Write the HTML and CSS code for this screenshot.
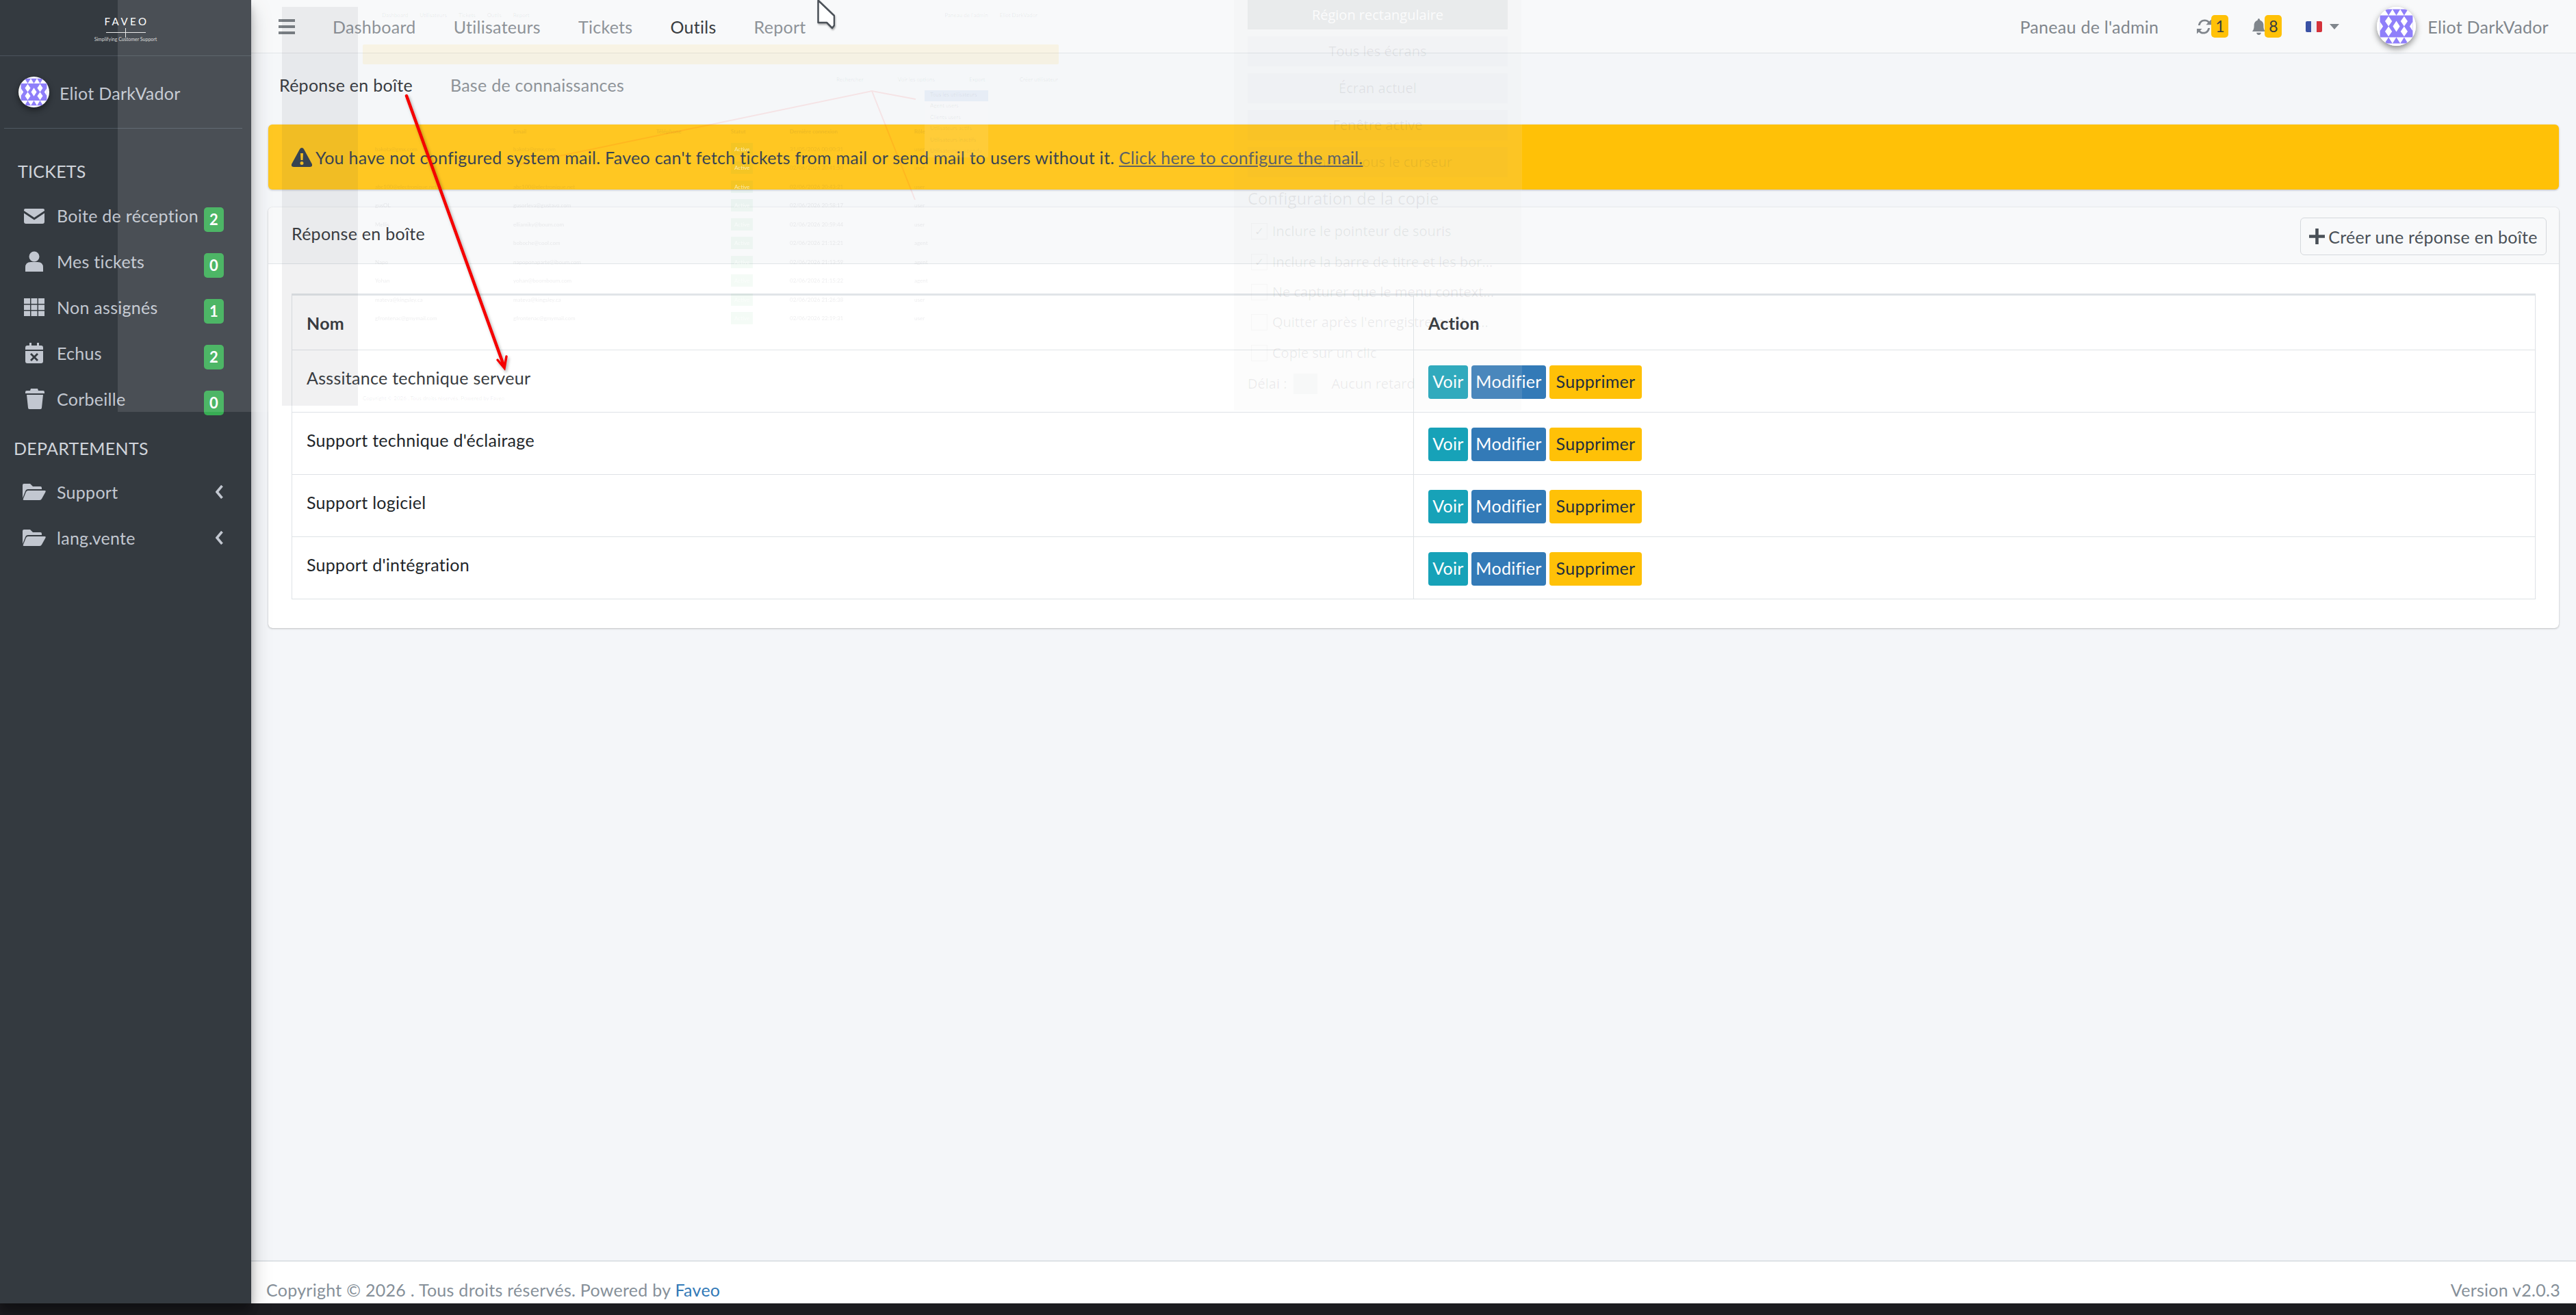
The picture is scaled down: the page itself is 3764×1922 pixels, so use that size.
FILE: index.html
```html
<!DOCTYPE html>
<html lang="fr">
<head>
  <meta charset="UTF-8">
  <title>Faveo - Réponse en boîte</title>
  <link rel="stylesheet" href="styles.css">
</head>
<body>
  <svg class="defs" width="0" height="0">
    <symbol id="identicon" viewBox="0 0 100 100">
      <rect width="100" height="100" fill="#fff"/>
      <path fill="#8f7ffa" d="M20 6H40L30 22ZM40 6H60L50 22ZM60 6H80L70 22ZM8 22H92V78H8ZM20 94H40L30 78ZM40 94H60L50 78ZM60 94H80L70 78Z"/>
      <path fill="#fff" d="M30 24L39 37L30 50L21 37ZM70 24L79 37L70 50L61 37ZM50 36L59 50L50 64L41 50ZM30 50L39 63L30 76L21 63ZM70 50L79 63L70 76L61 63ZM8 38L16 50L8 62ZM92 38V62L84 50Z"/>
    </symbol>
  </svg>

  <div class="app">
    <aside class="sidebar">
      <div class="brand">
        <div class="brand-name">FAVEO</div>
        <div class="brand-rule"></div>
        <div class="brand-tag">Simplifying Customer Support</div>
      </div>
      <div class="user-panel">
        <svg class="avatar"><use href="#identicon"/></svg>
        <span>Eliot DarkVador</span>
      </div>
      <div class="nav-head">TICKETS</div>
      <a class="nav-item">
        <svg class="nav-icon" viewBox="0 0 30 30"><path d="M2 5H28Q30 5 30 7V8L15 18L0 8V7Q0 5 2 5ZM0 11.500L15 21.500L30 11.500V24Q30 27 27 27H3Q0 27 0 24Z"/></svg>
        <span>Boite de réception</span><b class="badge">2</b>
      </a>
      <a class="nav-item">
        <svg class="nav-icon" viewBox="0 0 30 30"><circle cx="15" cy="8" r="7.500"/><path d="M2 30V24Q2 16 10 16H20Q28 16 28 24V30Z"/></svg>
        <span>Mes tickets</span><b class="badge">0</b>
      </a>
      <a class="nav-item">
        <svg class="nav-icon" viewBox="0 0 30 30"><path d="M0 2H9V10H0ZM10.500 2H19.500V10H10.500ZM21 2H30V10H21ZM0 11.500H9V19H0ZM10.500 11.500H19.500V19H10.500ZM21 11.500H30V19H21ZM0 20.500H9V28H0ZM10.500 20.500H19.500V28H10.500ZM21 20.500H30V28H21Z"/></svg>
        <span>Non assignés</span><b class="badge">1</b>
      </a>
      <a class="nav-item">
        <svg class="nav-icon" viewBox="0 0 30 30"><path fill-rule="evenodd" d="M8 0H11V4H19V0H22V4H25Q28 4 28 7V10H2V7Q2 4 5 4H8ZM2 12H28V27Q28 30 25 30H5Q2 30 2 27ZM11 15L9 17L13 21L9 25L11 27L15 23L19 27L21 25L17 21L21 17L19 15L15 19Z"/></svg>
        <span>Echus</span><b class="badge">2</b>
      </a>
      <a class="nav-item">
        <svg class="nav-icon" viewBox="0 0 30 30"><path d="M10 0H20L21 3H28Q30 3 30 5V7H2V5Q2 3 4 3H9ZM4 9H28L26 28Q26 30 24 30H8Q6 30 6 28Z"/></svg>
        <span>Corbeille</span><b class="badge">0</b>
      </a>
      <div class="nav-head nav-head-dept">DEPARTEMENTS</div>
      <a class="nav-item nav-dept">
        <svg class="nav-icon" viewBox="0 0 34 30"><path d="M0 5Q0 3 2 3H11L15 7H26Q28 7 28 9V11H8Q5 11 4 14L0 24ZM8 13H32Q35 13 33 16L28 25Q27 27 25 27H2Q0 27 1 25L5 15Q6 13 8 13Z"/></svg>
        <span>Support</span>
        <svg class="chevron" viewBox="0 0 12 20"><path d="M9.500 1L2 10L9.500 19" fill="none" stroke="currentColor" stroke-width="3.600"/></svg>
      </a>
      <a class="nav-item nav-dept">
        <svg class="nav-icon" viewBox="0 0 34 30"><path d="M0 5Q0 3 2 3H11L15 7H26Q28 7 28 9V11H8Q5 11 4 14L0 24ZM8 13H32Q35 13 33 16L28 25Q27 27 25 27H2Q0 27 1 25L5 15Q6 13 8 13Z"/></svg>
        <span>lang.vente</span>
        <svg class="chevron" viewBox="0 0 12 20"><path d="M9.500 1L2 10L9.500 19" fill="none" stroke="currentColor" stroke-width="3.600"/></svg>
      </a>
    </aside>

    <div class="main">
      <nav class="topbar">
        <svg class="burger" viewBox="0 0 24 22"><path d="M0 0H24V4H0ZM0 9H24V13H0ZM0 18H24V22H0Z"/></svg>
        <div class="top-links">
          <a>Dashboard</a>
          <a>Utilisateurs</a>
          <a>Tickets</a>
          <a class="active">Outils</a>
          <a>Report</a>
        </div>
        <div class="top-right">
          <a class="admin-link">Paneau de l'admin</a>
          <span class="top-icon">
            <svg viewBox="0 0 24 26"><path d="M3 11C4 5 8 2 13 2C16 2 18 3 20 5L23 2V10H15L18 7C16 5 15 5 13 5C9 5 7 7 6 11ZM21 15C20 21 16 24 11 24C8 24 6 23 4 21L1 24V16H9L6 19C8 21 9 21 11 21C15 21 17 19 18 15Z"/></svg>
            <b class="count">1</b>
          </span>
          <span class="top-icon top-bell">
            <svg viewBox="0 0 22 28"><path d="M11 0Q13 0 13 3Q19 5 19 12C19 18 20 19 22 22H0C2 19 3 18 3 12Q3 5 9 3Q9 0 11 0ZM7 24H15Q14 28 11 28Q8 28 7 24Z"/></svg>
            <b class="count">8</b>
          </span>
          <span class="lang">
            <span class="flag"><i></i><i></i><i></i></span>
            <span class="caret"></span>
          </span>
          <span class="top-user">
            <svg class="avatar avatar-top"><use href="#identicon"/></svg>
            <span>Eliot DarkVador</span>
          </span>
        </div>
      </nav>

      <div class="subnav">
        <a class="active">Réponse en boîte</a>
        <a>Base de connaissances</a>
      </div>

      <div class="content">
        <div class="alert">
          <svg class="alert-icon" viewBox="0 0 30 28"><path fill-rule="evenodd" d="M15 0Q17 0 18 2L30 24Q31 28 27 28H3Q-1 28 0 24L12 2Q13 0 15 0ZM13 8L13.500 18H16.500L17 8ZM15 20A2.500 2.500 0 1 0 15 25A2.500 2.500 0 1 0 15 20Z"/></svg>
          <span>You have not configured system mail. Faveo can't fetch tickets from mail or send mail to users without it. <a>Click here to configure the mail.</a></span>
        </div>

        <section class="card">
          <header class="card-head">
            <span class="card-title">Réponse en boîte</span>
            <a class="btn-create">
              <svg viewBox="0 0 20 20"><path d="M8 0H12V8H20V12H12V20H8V12H0V8H8Z"/></svg>
              <span>Créer une réponse en boîte</span>
            </a>
          </header>
          <div class="card-body">
            <table class="data-table">
              <thead>
                <tr><th class="col-name">Nom</th><th>Action</th></tr>
              </thead>
              <tbody>
                <tr>
                  <td>Asssitance technique serveur</td>
                  <td class="col-action"><a class="btn btn-info">Voir</a><a class="btn btn-blue">Modifier</a><a class="btn btn-warn">Supprimer</a></td>
                </tr>
                <tr>
                  <td>Support technique d'éclairage</td>
                  <td class="col-action"><a class="btn btn-info">Voir</a><a class="btn btn-blue">Modifier</a><a class="btn btn-warn">Supprimer</a></td>
                </tr>
                <tr>
                  <td>Support logiciel</td>
                  <td class="col-action"><a class="btn btn-info">Voir</a><a class="btn btn-blue">Modifier</a><a class="btn btn-warn">Supprimer</a></td>
                </tr>
                <tr>
                  <td>Support d'intégration</td>
                  <td class="col-action"><a class="btn btn-info">Voir</a><a class="btn btn-blue">Modifier</a><a class="btn btn-warn">Supprimer</a></td>
                </tr>
              </tbody>
            </table>
          </div>
        </section>
      </div>

      <footer class="footer">
        <span>Copyright © 2026 . Tous droits réservés. Powered by <a>Faveo</a></span>
        <span>Version v2.0.3</span>
      </footer>
    </div>
  </div>
  <div class="taskbar"></div>

  <!-- faded screenshot tool window sitting over the page -->
  <div class="ghost">
    <div class="mini-side"></div>
    <div class="mini-nav">
      <span>Dashboard</span><span>Utilisateurs</span><span>Tickets</span><span>Outils</span><span>Report</span>
      <span class="mini-push">Paneau de l'admin</span><span>Eliot DarkVador</span>
    </div>
    <div class="mini-alert"></div>
    <div class="mini-tools"><span>Rechercher</span><span>Voir les options</span><span>Export</span><span>Créer utilisateur</span></div>
    <div class="mini-table">
      <div class="mini-row mini-title"><span></span><span>Email</span><span>Téléphone</span><span>Statut</span><span>Dernière connexion</span><span>Rôle</span></div>
      <div class="mini-row"><span>bakota@gmx.com</span><span>bakota@gmx.com</span><span></span><span><i class="mini-tag">Active</i></span><span>31/05/2026 00:00:31</span><span>user</span></div>
      <div class="mini-row"><span></span><span></span><span></span><span><i class="mini-tag">Active</i></span><span>02/06/2026 20:41:50</span><span>user</span></div>
      <div class="mini-row"><span>abc100@electronique.net</span><span>abc100@electronique.net</span><span></span><span><i class="mini-tag">Active</i></span><span>02/06/2026 20:43:21</span><span>user</span></div>
      <div class="mini-row"><span>gusOL</span><span>gusorleva@gustavo.com</span><span></span><span><i class="mini-tag">Active</i></span><span>02/06/2026 20:58:17</span><span>user</span></div>
      <div class="mini-row"><span>Mellis</span><span>elliamiky@boum.com</span><span></span><span><i class="mini-tag">Active</i></span><span>02/06/2026 20:59:44</span><span>user</span></div>
      <div class="mini-row"><span></span><span>boboche@cool.com</span><span></span><span><i class="mini-tag">Active</i></span><span>02/06/2026 21:12:21</span><span>agent</span></div>
      <div class="mini-row"><span>Napo</span><span>napoponaparte@iboum.com</span><span></span><span><i class="mini-tag">Active</i></span><span>02/06/2026 21:13:59</span><span>agent</span></div>
      <div class="mini-row"><span>Yohan</span><span>yohan@boomboum.com</span><span></span><span><i class="mini-tag">Active</i></span><span>02/06/2026 21:15:22</span><span>agent</span></div>
      <div class="mini-row"><span>mateva@kingsley.ca</span><span>mateva@kingsley.ca</span><span></span><span><i class="mini-tag">Active</i></span><span>02/06/2026 21:26:38</span><span>user</span></div>
      <div class="mini-row"><span>gfrontenac@gmymail.com</span><span>gfrontenac@gmymail.com</span><span></span><span><i class="mini-tag">Active</i></span><span>02/06/2026 22:19:31</span><span>user</span></div>
    </div>
    <div class="mini-menu">
      <span class="sel">Tous les utilisateurs</span><span>Agent users</span><span>Clients users</span><span>Utilisateurs actifs</span><span>Utilisateurs inactifs</span><span>Utilisateurs suspendu</span>
    </div>
    <div class="mini-foot">Copyright © 2026 . Tous droits réservés. Powered by Faveo</div>
    <svg class="mini-arrows" viewBox="0 0 1000 600"><path d="M340 240L854 133L918 145M854 133L917 292" fill="none" stroke="#f00" stroke-opacity=".08" stroke-width="2"/></svg>

    <div class="tool-panel">
      <div class="tool-btn tool-main">Région rectangulaire</div>
      <div class="tool-btn">Tous les écrans</div>
      <div class="tool-btn">Écran actuel</div>
      <div class="tool-btn">Fenêtre active</div>
      <div class="tool-btn">Fenêtre sous le curseur</div>
      <div class="tool-title">Configuration de la copie</div>
      <div class="tool-check"><i>✓</i>Inclure le pointeur de souris</div>
      <div class="tool-check"><i>✓</i>Inclure la barre de titre et les bor...</div>
      <div class="tool-check"><i></i>Ne capturer que le menu context...</div>
      <div class="tool-check"><i></i>Quitter après l'enregistrement o...</div>
      <div class="tool-check"><i></i>Copie sur un clic</div>
      <div class="tool-delay"><span>Délai :</span><i></i><span>Aucun retard</span></div>
    </div>
  </div>

  <svg class="red-arrow" viewBox="0 0 200 420">
    <g fill="none" stroke="#f50000" stroke-linecap="round">
      <path d="M8 4L150 398" stroke-width="4.500"/>
      <path d="M141 390L151 402L154 385" stroke-width="3.500"/>
    </g>
  </svg>
  <svg class="cursor" viewBox="0 0 26 44"><path d="M1.500 1.500V34H14L22 42L25 38V24Z" fill="#fff" stroke="#4b5158" stroke-width="2.500" stroke-linejoin="round"/></svg>
</body>
</html>
```

FILE: styles.css
```css
* {
  box-sizing: border-box;
}

html, body {
  margin: 0;
  height: 100%;
}

body {
  position: relative;
  width: 3764px;
  height: 1922px;
  overflow: hidden;
  font-family: Lato, "Noto Sans", sans-serif;
  font-size: 25px;
  letter-spacing: 0.28px;
  line-height: 36px;
  color: #212529;
  background: #f4f6f9;
}

a {
  color: inherit;
  text-decoration: none;
}

.defs {
  position: absolute;
}

.app {
  display: flex;
  height: 1905px;
}

.taskbar {
  height: 17px;
  background: #1c1c20;
}

/* sidebar */
.sidebar {
  width: 367px;
  flex: none;
  background: #343a40;
  color: #c2c7d0;
  box-shadow: 0 14px 28px rgba(0, 0, 0, 0.25), 0 10px 10px rgba(0, 0, 0, 0.22);
  position: relative;
}

.brand {
  height: 82px;
  padding-top: 22px;
  border-bottom: 1px solid #4b545c;
  text-align: center;
  color: #fff;
  letter-spacing: 0;
}

.brand-name {
  font-size: 15px;
  line-height: 18px;
  letter-spacing: 3.500px;
  padding-left: 3px;
}

.brand-rule {
  width: 58px;
  height: 1px;
  margin: 7px auto 4px;
  background: #e8e8e8;
  position: relative;
}

.brand-rule::after {
  content: "";
  position: absolute;
  left: 28px;
  top: -6px;
  width: 1px;
  height: 14px;
  background: #e8e8e8;
}

.brand-tag {
  font-size: 7px;
  line-height: 10px;
  color: #d8d8d8;
}

.user-panel {
  height: 106px;
  margin: 0 13px 0 6px;
  padding-left: 21px;
  display: flex;
  align-items: center;
  gap: 15px;
  border-bottom: 1px solid #4f5962;
}

.user-panel span {
  padding-top: 3px;
}

.avatar {
  width: 45px;
  height: 45px;
  border-radius: 50%;
  flex: none;
  box-shadow: 0 4px 10px rgba(0, 0, 0, 0.45);
}

.nav-head {
  padding: 44px 0 13.5px 26px;
  color: #d0d4db;
}

.nav-head-dept {
  padding: 20.5px 0 12px 20px;
}

.nav-item {
  height: 67px;
  display: flex;
  align-items: center;
  padding: 0 40px 0 35px;
  white-space: nowrap;
}

.nav-icon {
  width: 30px;
  height: 30px;
  margin-right: 18px;
  flex: none;
  fill: #c2c7d0;
}

.nav-dept .nav-icon {
  width: 34px;
  margin-left: -2px;
  margin-right: 16px;
}

.badge {
  margin-left: auto;
  margin-top: 12px;
  width: 29px;
  flex: none;
  height: 36px;
  border-radius: 5px;
  background: #38ad54;
  color: #fff;
  text-align: center;
  font-size: 22px;
  font-weight: 700;
  letter-spacing: 0;
}

.chevron {
  width: 12px;
  height: 20px;
  margin-left: auto;
  color: #c2c7d0;
}

/* top bar */
.main {
  flex: 1;
  min-width: 0;
  display: flex;
  flex-direction: column;
}

.topbar {
  height: 78px;
  display: flex;
  align-items: center;
  padding: 0 40px;
  background: #f8f9fa;
  border-bottom: 1px solid #dee2e6;
  color: #80868c;
}

.burger {
  width: 24px;
  height: 22px;
  fill: #6b7177;
  margin-right: 55px;
}

.top-links, .subnav {
  display: flex;
  gap: 55px;
}

.active {
  color: #212529;
}

.top-right {
  margin-left: auto;
  display: flex;
  align-items: center;
}

.admin-link {
  margin-right: 55px;
}

.top-icon {
  display: flex;
  align-items: center;
  margin-right: 35px;
}

.top-icon svg {
  height: 26px;
  width: 23px;
  fill: #80868c;
}

.top-bell svg {
  width: 19px;
}

.count {
  width: 25px;
  height: 33px;
  margin-left: -1px;
  border-radius: 5px;
  background: #ffc107;
  color: #343a40;
  font-weight: 400;
  font-size: 23px;
  line-height: 33px;
  text-align: center;
  letter-spacing: 0;
}

.lang {
  display: flex;
  align-items: center;
  gap: 11px;
  margin-right: 55px;
}

.flag {
  display: flex;
  width: 24px;
  height: 16px;
  border-radius: 2px;
  overflow: hidden;
}

.flag i {
  flex: 1;
  background: #3a52a5;
}

.flag i:nth-child(2) {
  background: #eef0f6;
}

.flag i:nth-child(3) {
  background: #d4323a;
}

.caret {
  border: 7px solid transparent;
  border-top: 8px solid #80868c;
  border-bottom: 0;
}

.top-user {
  display: flex;
  align-items: center;
  gap: 17px;
}

.avatar-top {
  width: 57px;
  height: 57px;
}

/* page content */
.subnav {
  height: 92px;
  align-items: center;
  padding-left: 41px;
  color: #80868c;
}

.content {
  flex: 1;
  padding: 12px 25px 0;
}

.alert {
  height: 95px;
  display: flex;
  align-items: center;
  gap: 5px;
  padding-left: 34px;
  background: #ffc107;
  border-radius: 6px;
  color: #1f2d3d;
  box-shadow: 0 1px 3px rgba(0, 0, 0, 0.25);
}

.alert-icon {
  width: 30px;
  height: 28px;
  fill: #1f2d3d;
  flex: none;
}

.alert a {
  color: #4a4f55;
  text-decoration: underline;
}

.card {
  margin-top: 26px;
  background: #fff;
  border-radius: 6px;
  box-shadow: 0 0 1px rgba(0, 0, 0, 0.25), 0 1px 3px rgba(0, 0, 0, 0.2);
}

.card-head {
  height: 83px;
  display: flex;
  align-items: center;
  justify-content: space-between;
  padding: 0 18px 0 34px;
  background: #f8f9fa;
  border-bottom: 1px solid #dee2e6;
  border-radius: 6px 6px 0 0;
}

.card-title {
  margin-bottom: 6px;
}

.btn-create {
  height: 55px;
  width: 360px;
  margin-top: 3px;
  display: flex;
  align-items: center;
  justify-content: center;
  gap: 5px;
  border: 1px solid #d5d8dc;
  border-radius: 6px;
  color: #495057;
  white-space: nowrap;
}

.btn-create svg {
  width: 23px;
  height: 23px;
  fill: #495057;
  flex: none;
}

.card-body {
  padding: 43px 34px 42px;
}

.data-table {
  width: 100%;
  border-collapse: collapse;
  table-layout: fixed;
  border-top: 3px solid #dee2e6;
}

.data-table th {
  height: 81px;
  text-align: left;
  font-weight: 700;
  padding: 0 21px;
  border: 1px solid #dee2e6;
  border-top: 0;
}

.data-table td {
  height: 91px;
  padding: 22px 21px 0;
  vertical-align: top;
  border: 1px solid #dee2e6;
}

.col-name {
  width: 1639px;
}

.btn {
  display: inline-block;
  height: 49px;
  line-height: 47px;
  margin-right: 5px;
  border-radius: 4px;
  vertical-align: top;
  text-align: center;
}

.btn-info {
  width: 58px;
  background: #17a2b8;
  color: #fff;
}

.btn-blue {
  width: 109px;
  background: #337ab7;
  color: #fff;
}

.btn-warn {
  width: 135px;
  background: #ffc107;
  color: #1f2d3d;
}

.footer {
  height: 63px;
  padding: 23px 23px 0 22px;
  display: flex;
  justify-content: space-between;
  background: #fff;
  border-top: 2px solid #dee2e6;
  color: #869099;
}

.footer a {
  color: #337ab7;
}

/* overlays */
.ghost {
  position: absolute;
  left: 172px;
  top: 0;
  width: 2052px;
  height: 602px;
  background: rgba(255, 255, 255, 0.11);
  font-size: 8px;
  letter-spacing: 0;
  line-height: 12px;
  color: rgba(52, 58, 64, 0.09);
}

.mini-side {
  position: absolute;
  left: 240px;
  top: 10px;
  width: 111px;
  height: 583px;
  background: rgba(52, 58, 64, 0.07);
}

.mini-nav {
  position: absolute;
  left: 386px;
  top: 16px;
  width: 958px;
  display: flex;
  gap: 17px;
}

.mini-push {
  margin-left: auto;
}

.mini-alert {
  position: absolute;
  left: 358px;
  top: 65px;
  width: 1017px;
  height: 29px;
  background: rgba(255, 193, 7, 0.09);
  border-radius: 2px;
}

.mini-tools {
  position: absolute;
  left: 1050px;
  top: 110px;
  width: 324px;
  display: flex;
  justify-content: space-between;
}

.mini-table {
  position: absolute;
  left: 376px;
  top: 179px;
  width: 990px;
  filter: blur(0.4px);
}

.mini-row {
  height: 27.500px;
  display: grid;
  grid-template-columns: 202px 209px 109px 86px 182px 60px;
  align-items: center;
}

.mini-title {
  font-weight: 700;
  height: 25px;
}

.mini-tag {
  font-style: normal;
  padding: 4px 5px;
  background: rgba(40, 167, 69, 0.05);
  color: rgba(255, 255, 255, 0.6);
}

.mini-menu {
  position: absolute;
  left: 1179px;
  top: 132px;
  width: 93px;
  display: flex;
  flex-direction: column;
  background: rgba(255, 255, 255, 0.1);
}

.mini-menu span {
  height: 16.400px;
  padding-left: 8px;
}

.mini-menu .sel {
  background: rgba(0, 90, 200, 0.06);
}

.mini-foot {
  position: absolute;
  left: 358px;
  top: 576px;
}

.mini-arrows {
  position: absolute;
  left: 248px;
  top: 0;
  width: 1000px;
  height: 600px;
}

.tool-panel {
  position: absolute;
  left: 1631px;
  top: 0;
  width: 420px;
  height: 600px;
  padding: 0 20px;
  background: rgba(110, 120, 140, 0.025);
  font-family: "Open Sans", sans-serif;
  font-size: 20px;
  line-height: 30px;
  color: rgba(52, 58, 64, 0.09);
}

.tool-btn {
  height: 44px;
  margin-bottom: 10px;
  display: flex;
  align-items: center;
  justify-content: center;
  background: rgba(110, 120, 140, 0.02);
}

.tool-main {
  height: 43px;
  background: rgba(90, 95, 105, 0.07);
  color: rgba(255, 255, 255, 0.85);
}

.tool-title {
  font-size: 24px;
  height: 36px;
  margin-top: 13px;
  margin-bottom: 8px;
  line-height: 36px;
}

.tool-check {
  height: 44.400px;
  display: flex;
  align-items: center;
  gap: 7px;
  padding-left: 5px;
  white-space: nowrap;
}

.tool-check i {
  width: 24px;
  height: 24px;
  border: 1px solid rgba(52, 58, 64, 0.03);
  font-style: normal;
  font-size: 17px;
  line-height: 22px;
  text-align: center;
}

.tool-delay {
  display: flex;
  align-items: center;
  gap: 10px;
  margin-top: 8px;
  white-space: nowrap;
}

.tool-delay i {
  width: 35px;
  height: 30px;
  margin-right: 10px;
  background: rgba(110, 120, 140, 0.03);
}

.red-arrow {
  position: absolute;
  left: 586px;
  top: 136px;
  width: 200px;
  height: 420px;
  filter: drop-shadow(2px 3px 2px rgba(0, 0, 0, 0.3));
}

.cursor {
  position: absolute;
  left: 1194px;
  top: -1px;
  width: 26px;
  height: 44px;
  filter: drop-shadow(1px 2px 1px rgba(0, 0, 0, 0.3));
}
```
